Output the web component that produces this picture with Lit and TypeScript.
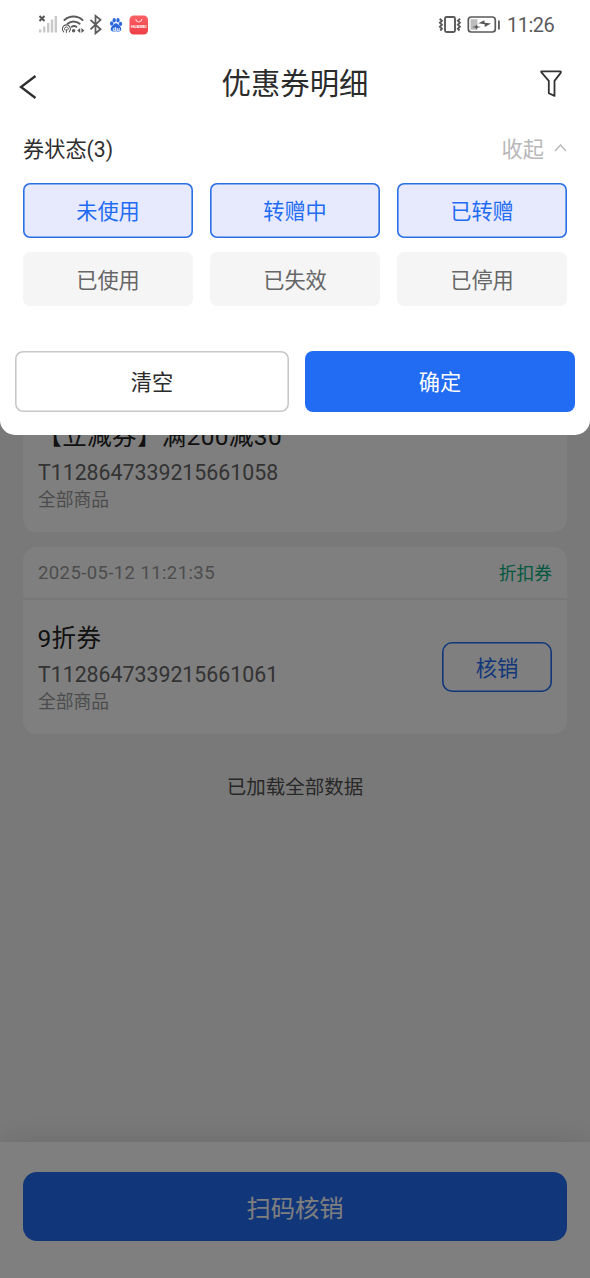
import { LitElement, html, css } from "lit";
import { customElement, property, state } from "lit/decorators.js";
import { classMap } from "lit/directives/class-map.js";

@customElement("status-bar")
class StatusBar extends LitElement {
  static styles = css`
    :host { display: flex; justify-content: space-between; height: 48px; padding: 0 35px 0 38px; box-sizing: border-box; }
    .side { display: flex; align-items: center; height: 49px; }
    .time { font-size: 20px; color: #5b5b5b; width: 48px; margin-left: 6px; letter-spacing: -0.5px; padding-top: 1px; white-space: nowrap; }
    svg { display: block; }
    .logo-text { font: 700 4px "Liberation Sans", sans-serif; fill: #fff; }
    .baidu-text { font: 700 6px "Liberation Sans", sans-serif; fill: #fff; }
  `;
  render() {
    return html`
      <div class="side">
        <svg width="112" height="24" viewBox="38 12.500 112 24" fill="none">
          <path d="M39.500 15.500l5 5M44.500 15.500l-5 5" stroke="#555" stroke-width="2"/>
          <g fill="#c9c9c9">
            <rect x="39" y="29" width="2.400" height="3"/><rect x="43" y="26" width="2.400" height="6"/>
            <rect x="47" y="22.500" width="2.400" height="9.500"/><rect x="50.800" y="19" width="2.400" height="13"/>
            <rect x="54.600" y="15.500" width="2.400" height="16.500"/>
          </g>
          <g stroke="#5c5c5c" stroke-linecap="round">
            <path d="M64.500 19.500a13.500 13.500 0 0 1 18 0" stroke-width="2"/>
            <path d="M67.600 23.200a9 9 0 0 1 12 0" stroke-width="2"/>
            <path d="M71.800 26.200a4.400 4.400 0 0 1 4.600 0" stroke-width="1.800"/>
            <path d="M63.700 31.300a4 4 0 1 1 5.400 0" stroke-width="1.100"/>
            <path d="M65 29.600a1.900 1.900 0 1 1 2.800 0M66.400 29v3" stroke-width="1"/>
          </g>
          <circle cx="73.600" cy="30.300" r="1.700" fill="#5c5c5c"/>
          <path d="M77.200 30l3-2.600v5.200zM84.400 30l-3-2.600v5.200z" fill="#5c5c5c"/>
          <path d="M90.500 19.300l10 9.500-5 4V15.300l5 4-10 9.500" stroke="#5c5c5c" stroke-width="1.800"/>
          <g fill="#2b66dc">
            <ellipse cx="111.700" cy="23" rx="1.700" ry="2.200"/><ellipse cx="114.200" cy="19.700" rx="1.600" ry="2.300"/>
            <ellipse cx="118" cy="19.800" rx="1.600" ry="2.300"/><ellipse cx="120.500" cy="23.400" rx="1.700" ry="2.100"/>
            <path d="M116 22.700c1.800 0 2.800 2.200 4.200 3.400 1.800 1.600 1.200 4.900-1.200 5-1.300.1-2-.3-3-.3s-1.800.4-3 .3c-2.500-.2-3-3.400-1.200-5 1.400-1.200 2.300-3.400 4.200-3.400z"/>
          </g>
          <text class="baidu-text" x="112.600" y="30">du</text>
          <defs><linearGradient id="hw" x2="0" y2="1"><stop stop-color="#fa6064"/><stop offset="1" stop-color="#ee3f46"/></linearGradient></defs>
          <rect x="129.500" y="15" width="18.500" height="19" rx="4.300" fill="url(#hw)"/>
          <path d="M135.800 18.500a3 3 0 0 0 6 0" stroke="#fff" stroke-width=".8"/>
          <text class="logo-text" x="131" y="27.500" textLength="15.500">HUAWEI</text>
        </svg>
      </div>
      <div class="side">
        <svg width="63" height="24" viewBox="438 12.500 63 24" fill="none">
          <rect x="445" y="16.500" width="10" height="15" rx="1.500" stroke="#5a5a5a" stroke-width="1.900"/>
          <path d="M439.700 18.200l2.200 2-2 2 2 2-2 2 2 2-1.600 1.800M460.100 18.200l-2.200 2 2 2-2 2 2 2-2 2 1.600 1.800" stroke="#5a5a5a" stroke-width="1.900"/>
          <rect x="468.300" y="16.500" width="27" height="15" rx="3" stroke="#5a5a5a" stroke-width="1.700"/>
          <rect x="470.500" y="18.700" width="7" height="10.600" fill="#bdbdbd"/>
          <path d="M478.300 22.700l6.200-3v2.500l6.500.7-6.300 3.600v-2.800z" fill="#555"/>
          <path d="M472 26.500l3.500-.7.800-1.800.9 1.800 3.800.7-3.800.7-.9 1.800-.8-1.800z" fill="#555"/>
          <rect x="498" y="20" width="1.800" height="9" fill="#5a5a5a"/>
        </svg>
        <span class="time">11:26</span>
      </div>`;
  }
}

interface Coupon { time: string; kind: string; name: string; code: string; scope: string; action: boolean; }

@customElement("coupon-card")
class CouponCard extends LitElement {
  @property({ attribute: false }) coupon!: Coupon;
  static styles = css`
    :host { display: block; height: 187px; border-radius: 14px; background: #fff; overflow: hidden; }
    .head { display: flex; justify-content: space-between; align-items: center; height: 53px; box-sizing: border-box;
      padding: 0 15px; border-bottom: 2px solid #f0f0f0; font-size: 17.8px; color: #999; }
    .date { font-size: 18.500px; letter-spacing: .4px; }
    .kind { color: #05b17d; line-height: 26px; padding-top: 2px; }
    .body { display: flex; justify-content: space-between; align-items: center; height: 134px; padding: 0 15px; }
    .name { font-size: 24.500px; line-height: 36px; color: #222; margin-top: 2px; margin-left: -.5px; letter-spacing: .35px; }
    .code { font-size: 21.300px; line-height: 27px; margin-top: 4px; color: #666; }
    .scope { font-size: 17.800px; line-height: 26px; color: #999; padding-top: 1px; }
    .act { width: 110px; height: 50px; box-sizing: border-box; border: 0; box-shadow: inset 0 0 0 1.6px #226cf3; border-radius: 10px;
      background: none; color: #226cf3; font: inherit; font-size: 21.300px; padding: 0 0 1px; }
  `;
  render() {
    const c = this.coupon;
    return html`
      <div class="head"><span class="date">${c.time}</span><span class="kind">${c.kind}</span></div>
      <div class="body">
        <div>
          <div class="name">${c.name}</div>
          <div class="code">${c.code}</div>
          <div class="scope">${c.scope}</div>
        </div>
        ${c.action ? html`<button class="act">核销</button>` : null}
      </div>`;
  }
}

@customElement("filter-sheet")
class FilterSheet extends LitElement {
  @state() private options = ["未使用", "转赠中", "已转赠", "已使用", "已失效", "已停用"];
  @state() private picked = new Set(["未使用", "转赠中", "已转赠"]);
  static styles = css`
    :host { display: block; height: 435px; background: #fff; border-radius: 0 0 15px 15px; overflow: hidden; }
    .nav { display: grid; grid-template-columns: 60px 1fr 60px; align-items: center; height: 70px; }
    .nav svg, .fold svg { display: block; }
    .back { padding: 7px 0 0 18px; }
    .funnel { padding-left: 8px; }
    .title { text-align: center; font-size: 29.400px; color: #2b2b2b; line-height: 40px; padding-top: 1px; }
    .row { display: flex; justify-content: space-between; align-items: center; height: 60px; box-sizing: border-box;
      padding: 0 23px 2px; font-size: 21.200px; color: #2e2e2e; }
    .fold { display: flex; align-items: center; gap: 9px; color: #b8b8b8; }
    .chips { display: grid; grid-template-columns: repeat(3, 170px); justify-content: space-between; row-gap: 14px; padding: 5px 23px 0; }
    .chip { height: 54.500px; box-sizing: border-box; border: 0; border-radius: 7px; background: #f5f5f5; color: #666;
      font: inherit; font-size: 21.200px; padding: 0; }
    .on { background: #e7eafd; color: #226cf3; box-shadow: inset 0 0 0 1.6px #2a6fe6; padding-bottom: 2px; }
    .foot { display: grid; grid-template-columns: 274px 270px; gap: 16px; padding: 45px 15px 0; }
    .btn { height: 61px; box-sizing: border-box; border: 0; box-shadow: inset 0 0 0 1.6px #c8c8c8; border-radius: 8px;
      background: #fff; color: #2b2b2b; font: inherit; font-size: 21.200px; padding: 0 0 2px; }
    .ok { box-shadow: none; background: #226cf3; color: #fff; }
  `;
  private toggle(o: string) {
    const next = new Set(this.picked);
    next.has(o) ? next.delete(o) : next.add(o);
    this.picked = next;
  }
  render() {
    return html`
      <status-bar></status-bar>
      <div class="nav">
        <div class="back"><svg width="20" height="24" viewBox="0 0 20 24" fill="none"><path d="M17.500 1L3 12l14.500 11" stroke="#2e2e2e" stroke-width="2.300"/></svg></div>
        <div class="title">优惠券明细</div>
        <div class="funnel"><svg width="26" height="30" viewBox="538 68 26 30" fill="none"><path d="M541.500 71.300h18.500q1.400 0 .7 1.600l-6.200 8v15l-5.700-2.600V80.900l-6.900-8q-1.200-1.600-.4-1.600z" stroke="#333" stroke-width="1.800" stroke-linejoin="round"/></svg></div>
      </div>
      <div class="row">
        <span>券状态(${this.picked.size})</span>
        <span class="fold">收起<svg width="14" height="9" viewBox="0 0 14 9" fill="none"><path d="M2 8l5.500-6L13 8" stroke="#b5b5b5" stroke-width="1.200"/></svg></span>
      </div>
      <div class="chips">
        ${this.options.map((o) => html`<button class=${classMap({ chip: true, on: this.picked.has(o) })} @click=${() => this.toggle(o)}>${o}</button>`)}
      </div>
      <div class="foot"><button class="btn">清空</button><button class="btn ok">确定</button></div>`;
  }
}

@customElement("app-root")
class AppRoot extends LitElement {
  private coupons: Coupon[] = [
    { time: "", kind: "", name: "【立减券】满200减30", code: "T1128647339215661058", scope: "全部商品", action: false },
    { time: "2025-05-12 11:21:35", kind: "折扣券", name: "9折券", code: "T1128647339215661061", scope: "全部商品", action: true },
  ];
  static styles = css`
    :host { display: block; position: relative; width: 590px; height: 1278px; overflow: hidden;
      font-family: Roboto, "Noto Sans CJK SC", sans-serif; }
    .page { display: flex; flex-direction: column; height: 100%; background: #f3f3f3; }
    .list { flex: 1; display: flex; flex-direction: column; gap: 15px; padding: 345px 23px 0; }
    .end { text-align: center; font-size: 19.500px; line-height: 30px; color: #505050; margin-top: 24px; }
    .bar { height: 136px; box-sizing: border-box; padding: 29.500px 23px 0; background: #fff; box-shadow: 0 0 30px rgba(0, 0, 0, .12); }
    .scan { display: block; width: 100%; height: 69px; border: 0; border-radius: 14px; background: #226cf3; color: #fff;
      font: inherit; font-size: 24.300px; padding: 0; }
    .mask { position: absolute; inset: 0; background: rgba(0, 0, 0, .5); }
  `;
  render() {
    return html`
      <div class="page">
        <div class="list">
          ${this.coupons.map((c) => html`<coupon-card .coupon=${c}></coupon-card>`)}
          <div class="end">已加载全部数据</div>
        </div>
        <div class="bar"><button class="scan">扫码核销</button></div>
      </div>
      <div class="mask"><filter-sheet></filter-sheet></div>`;
  }
}
